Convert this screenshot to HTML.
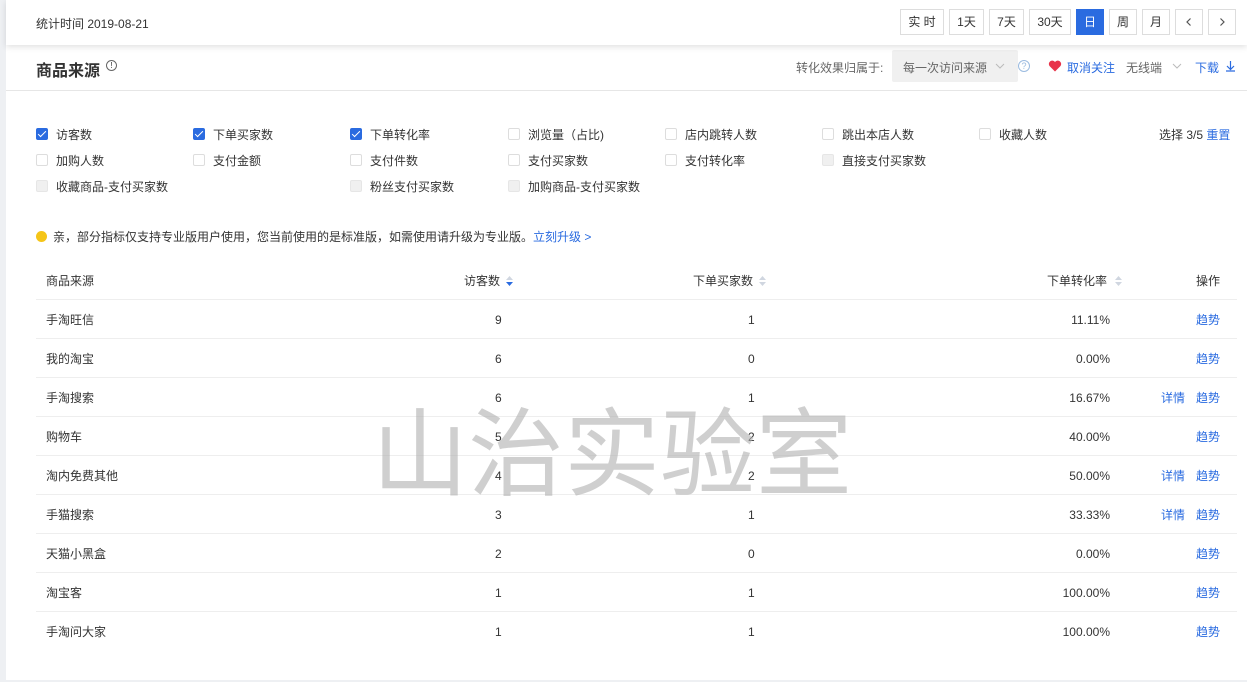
<!DOCTYPE html>
<html><head><meta charset="utf-8"><style>
*{margin:0;padding:0;box-sizing:border-box}
body{width:1247px;height:682px;background:#eef0f3;font-family:"Liberation Sans","Noto Sans CJK SC",sans-serif;font-size:12px;color:#333;position:relative;overflow:hidden}
.card{position:absolute;left:6px;top:0;width:1241px;height:680px;background:#fff}
.top{position:absolute;left:6px;top:0;width:1241px;height:45px;background:#fff;box-shadow:0 2px 6px rgba(0,0,0,.12);z-index:2}
.abs{position:absolute;white-space:nowrap}
.btn{position:absolute;top:9px;height:26px;border:1px solid #ddd;background:#fff;text-align:center;line-height:24px;font-size:12px;color:#333}
.cb{position:absolute;width:12px;height:12px;border:1px solid #ddd;border-radius:2px;background:#fff}
.cb.on{background:#2a6be0;border-color:#2a6be0}
.cb.dis{background:#f0f0f0;border-color:#e6e6e6}
.cb.on::after{content:"";position:absolute;left:3px;top:0px;width:3px;height:7px;border:solid #fff;border-width:0 1.5px 1.5px 0;transform:rotate(45deg)}
.lbl{position:absolute;font-size:12px;color:#333;white-space:nowrap;line-height:14px}
.row{position:absolute;left:36px;width:1201px;height:39px;border-top:1px solid #eee}
.c{position:absolute;top:13px;font-size:12px;color:#333;white-space:nowrap;line-height:14px}
.blue{color:#2a6be0}
</style></head><body>
<div class="card"></div>
<div class="top">
<div class="abs" style="left:30px;top:15px;font-size:12px;color:#333">统计时间 2019-08-21</div>
</div>
<div class="btn" style="left:900px;width:44px;z-index:3">实 时</div>
<div class="btn" style="left:949px;width:35px;z-index:3">1天</div>
<div class="btn" style="left:989px;width:35px;z-index:3">7天</div>
<div class="btn" style="left:1029px;width:42px;z-index:3">30天</div>
<div class="btn" style="left:1076px;width:28px;z-index:3;background:#2a6be0;border-color:#2a6be0;color:#fff">日</div>
<div class="btn" style="left:1109px;width:28px;z-index:3">周</div>
<div class="btn" style="left:1142px;width:28px;z-index:3">月</div>
<div class="btn" style="left:1175px;width:28px;z-index:3"><svg width="10" height="10" viewBox="0 0 10 10" style="margin-top:7px"><path d="M6.5 1.5L3 5l3.5 3.5" fill="none" stroke="#555" stroke-width="1.2"/></svg></div>
<div class="btn" style="left:1208px;width:28px;z-index:3"><svg width="10" height="10" viewBox="0 0 10 10" style="margin-top:7px"><path d="M3.5 1.5L7 5 3.5 8.5" fill="none" stroke="#555" stroke-width="1.2"/></svg></div>

<div class="abs" style="left:36px;top:57px;font-size:16px;font-weight:bold;color:#333">商品来源</div>
<div class="abs" style="left:106px;top:60px;width:11px;height:11px;border:1px solid #666;border-radius:50%;font-size:8px;line-height:9px;text-align:center">!</div>
<div class="abs" style="left:796px;top:59px;color:#666">转化效果归属于:</div>
<div class="abs" style="left:892px;top:50px;width:126px;height:32px;background:#f0f0f0;border-radius:2px"></div>
<div class="abs" style="left:903px;top:59px;color:#666">每一次访问来源</div>
<svg class="abs" style="left:995px;top:62px" width="10" height="8" viewBox="0 0 10 8"><path d="M1 2l4 4 4-4" fill="none" stroke="#bbb"/></svg>
<div class="abs" style="left:1018px;top:60px;width:12px;height:12px;border:1px solid #9bbbe0;border-radius:50%;font-size:9px;line-height:10px;text-align:center;color:#9bbbe0">?</div>
<svg class="abs" style="left:1048px;top:60px" width="14" height="12" viewBox="0 0 14 12"><path d="M7 11.5L1.5 6A3.2 3.2 0 0 1 7 2a3.2 3.2 0 0 1 5.5 4z" fill="#e8334a"/></svg>
<div class="abs blue" style="left:1067px;top:59px">取消关注</div>
<div class="abs" style="left:1126px;top:59px;color:#666">无线端</div>
<svg class="abs" style="left:1172px;top:62px" width="10" height="8" viewBox="0 0 10 8"><path d="M1 2l4 4 4-4" fill="none" stroke="#bbb"/></svg>
<div class="abs blue" style="left:1195px;top:59px">下载</div>
<svg class="abs" style="left:1225px;top:60px" width="11" height="12" viewBox="0 0 11 12"><path d="M5.5 1v8M2 6l3.5 3.5L9 6M1 11h9" fill="none" stroke="#2a6be0" stroke-width="1.2"/></svg>
<div class="abs" style="left:6px;top:90px;width:1241px;height:1px;background:#e6e6e6"></div>

<div class="cb on" style="left:36px;top:128px"></div><div class="lbl" style="left:56px;top:128px">访客数</div>
<div class="cb on" style="left:193px;top:128px"></div><div class="lbl" style="left:213px;top:128px">下单买家数</div>
<div class="cb on" style="left:350px;top:128px"></div><div class="lbl" style="left:370px;top:128px">下单转化率</div>
<div class="cb" style="left:508px;top:128px"></div><div class="lbl" style="left:528px;top:128px">浏览量（占比)</div>
<div class="cb" style="left:665px;top:128px"></div><div class="lbl" style="left:685px;top:128px">店内跳转人数</div>
<div class="cb" style="left:822px;top:128px"></div><div class="lbl" style="left:842px;top:128px">跳出本店人数</div>
<div class="cb" style="left:979px;top:128px"></div><div class="lbl" style="left:999px;top:128px">收藏人数</div>
<div class="lbl" style="left:1159px;top:128px">选择 3/5 <span class="blue">重置</span></div>
<div class="cb" style="left:36px;top:154px"></div><div class="lbl" style="left:56px;top:154px">加购人数</div>
<div class="cb" style="left:193px;top:154px"></div><div class="lbl" style="left:213px;top:154px">支付金额</div>
<div class="cb" style="left:350px;top:154px"></div><div class="lbl" style="left:370px;top:154px">支付件数</div>
<div class="cb" style="left:508px;top:154px"></div><div class="lbl" style="left:528px;top:154px">支付买家数</div>
<div class="cb" style="left:665px;top:154px"></div><div class="lbl" style="left:685px;top:154px">支付转化率</div>
<div class="cb dis" style="left:822px;top:154px"></div><div class="lbl" style="left:842px;top:154px">直接支付买家数</div>
<div class="cb dis" style="left:36px;top:180px"></div><div class="lbl" style="left:56px;top:180px">收藏商品-支付买家数</div>
<div class="cb dis" style="left:350px;top:180px"></div><div class="lbl" style="left:370px;top:180px">粉丝支付买家数</div>
<div class="cb dis" style="left:508px;top:180px"></div><div class="lbl" style="left:528px;top:180px">加购商品-支付买家数</div>

<div class="abs" style="left:36px;top:231px;width:11px;height:11px;border-radius:50%;background:#f5c518"></div>
<div class="lbl" style="left:53px;top:230px">亲，部分指标仅支持专业版用户使用，您当前使用的是标准版，如需使用请升级为专业版。<span class="blue">立刻升级 &gt;</span></div>

<div class="lbl" style="left:46px;top:274px">商品来源</div>
<div class="lbl" style="left:464px;top:274px">访客数</div>
<svg class="abs" style="left:506px;top:276px" width="7" height="10" viewBox="0 0 7 10"><path d="M3.5 0L7 4H0z" fill="#d0d6e0"/><path d="M3.5 10L7 6H0z" fill="#2a6be0"/></svg>
<div class="lbl" style="left:693px;top:274px">下单买家数</div>
<svg class="abs" style="left:759px;top:276px" width="7" height="10" viewBox="0 0 7 10"><path d="M3.5 0L7 4H0z" fill="#d0d6e0"/><path d="M3.5 10L7 6H0z" fill="#d0d6e0"/></svg>
<div class="lbl" style="left:1047px;top:274px">下单转化率</div>
<svg class="abs" style="left:1115px;top:276px" width="7" height="10" viewBox="0 0 7 10"><path d="M3.5 0L7 4H0z" fill="#d0d6e0"/><path d="M3.5 10L7 6H0z" fill="#d0d6e0"/></svg>
<div class="lbl" style="left:1196px;top:274px">操作</div>

<div class="row" style="top:299px"><div class="c" style="left:10px">手淘旺信</div><div class="c" style="left:459px">9</div><div class="c" style="left:712px">1</div><div class="c" style="right:127px">11.11%</div><div class="c blue" style="left:1160px">趋势</div></div>
<div class="row" style="top:338px"><div class="c" style="left:10px">我的淘宝</div><div class="c" style="left:459px">6</div><div class="c" style="left:712px">0</div><div class="c" style="right:127px">0.00%</div><div class="c blue" style="left:1160px">趋势</div></div>
<div class="row" style="top:377px"><div class="c" style="left:10px">手淘搜索</div><div class="c" style="left:459px">6</div><div class="c" style="left:712px">1</div><div class="c" style="right:127px">16.67%</div><div class="c blue" style="left:1125px">详情</div><div class="c blue" style="left:1160px">趋势</div></div>
<div class="row" style="top:416px"><div class="c" style="left:10px">购物车</div><div class="c" style="left:459px">5</div><div class="c" style="left:712px">2</div><div class="c" style="right:127px">40.00%</div><div class="c blue" style="left:1160px">趋势</div></div>
<div class="row" style="top:455px"><div class="c" style="left:10px">淘内免费其他</div><div class="c" style="left:459px">4</div><div class="c" style="left:712px">2</div><div class="c" style="right:127px">50.00%</div><div class="c blue" style="left:1125px">详情</div><div class="c blue" style="left:1160px">趋势</div></div>
<div class="row" style="top:494px"><div class="c" style="left:10px">手猫搜索</div><div class="c" style="left:459px">3</div><div class="c" style="left:712px">1</div><div class="c" style="right:127px">33.33%</div><div class="c blue" style="left:1125px">详情</div><div class="c blue" style="left:1160px">趋势</div></div>
<div class="row" style="top:533px"><div class="c" style="left:10px">天猫小黑盒</div><div class="c" style="left:459px">2</div><div class="c" style="left:712px">0</div><div class="c" style="right:127px">0.00%</div><div class="c blue" style="left:1160px">趋势</div></div>
<div class="row" style="top:572px"><div class="c" style="left:10px">淘宝客</div><div class="c" style="left:459px">1</div><div class="c" style="left:712px">1</div><div class="c" style="right:127px">100.00%</div><div class="c blue" style="left:1160px">趋势</div></div>
<div class="row" style="top:611px"><div class="c" style="left:10px">手淘问大家</div><div class="c" style="left:459px">1</div><div class="c" style="left:712px">1</div><div class="c" style="right:127px">100.00%</div><div class="c blue" style="left:1160px">趋势</div></div>

<div class="abs" style="left:372px;top:392px;font-size:96px;line-height:110px;color:rgba(175,175,175,.6);font-family:'Noto Sans CJK SC',sans-serif">山治实验室</div>
</body></html>
